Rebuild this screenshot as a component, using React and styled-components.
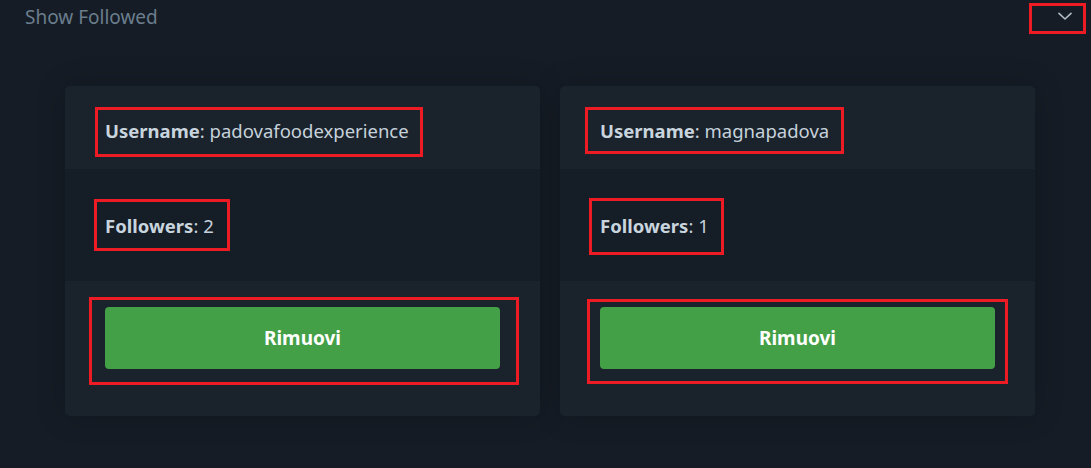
import React from "react";
import styled, { createGlobalStyle } from "styled-components";

const Global = createGlobalStyle`
  html, body { margin: 0; padding: 0; background: #151c25; }
  body { font-family: "Noto Sans", "Open Sans", sans-serif; }
  * { box-sizing: border-box; }
`;

const Page = styled.div`
  width: 1091px;
  height: 468px;
  background: #151c25;
  overflow: hidden;
`;

const Header = styled.div`
  position: relative;
  height: 35px;
  display: flex;
  align-items: center;
  justify-content: space-between;
  padding: 0 14px 2px 25px;
`;

const Title = styled.span`
  font-size: 19px;
  color: #6b7e8d;
`;

const Toggle = styled.button`
  background: none;
  border: none;
  padding: 0;
  width: 24px;
  height: 24px;
  display: flex;
  align-items: center;
  justify-content: center;
  color: #aebac5;
  margin-top: -1px;
`;

const CardRow = styled.div`
  display: grid;
  grid-template-columns: 475px 475px;
  gap: 20px;
  padding: 51px 0 0 65px;
`;

const Card = styled.div`
  border-radius: 5px;
  overflow: hidden;
  background: #1a222b;
  box-shadow: 0 0 30px rgba(0, 0, 0, 0.18);
  display: flex;
  flex-direction: column;
`;

const Section = styled.div`
  position: relative;
  background: ${(p) => (p.$dark ? "#151d26" : "#1a222b")};
  padding: ${(p) => p.$pad};
`;

const Field = styled.div`
  font-size: 18.5px;
  line-height: 26px;
  color: #c6d2db;
  b { font-weight: 700; color: #c9d5de; }
`;

const RemoveButton = styled.button`
  display: block;
  width: 100%;
  height: 62px;
  border: none;
  border-radius: 4px;
  background: #43a047;
  color: #ffffff;
  font-family: "Noto Sans", "Open Sans", sans-serif;
  font-size: 19px;
  font-weight: 700;
  cursor: pointer;
`;

const Mark = styled.div`
  position: absolute;
  border: 3px solid #ed1c24;
  pointer-events: none;
`;

const Chevron = () => (
  <svg width="18" height="18" viewBox="0 0 24 24" fill="none" stroke="currentColor" strokeWidth="2.2" strokeLinecap="round" strokeLinejoin="round">
    <path d="M4 8.5l8 7.5 8-7.5" />
  </svg>
);

const users = [
  {
    name: "padovafoodexperience",
    followers: 2,
    marks: [
      { left: 30, top: 21, width: 328, height: 50 },
      { left: 29, top: 30, width: 136, height: 52 },
      { left: 24, top: 16, width: 430, height: 88 },
    ],
  },
  {
    name: "magnapadova",
    followers: 1,
    marks: [
      { left: 25, top: 21, width: 259, height: 47 },
      { left: 29, top: 29, width: 135, height: 57 },
      { left: 27, top: 18, width: 421, height: 85 },
    ],
  },
];

export default function App() {
  return (
    <Page>
      <Global />
      <Header>
        <Title>Show Followed</Title>
        <Toggle aria-label="toggle">
          <Chevron />
        </Toggle>
        <Mark style={{ left: 1029, top: 3, width: 57, height: 31 }} />
      </Header>
      <CardRow>
        {users.map((u) => (
          <Card key={u.name}>
            <Section $pad="32px 40px 25px">
              <Field>
                <b>Username</b>: {u.name}
              </Field>
              <Mark style={u.marks[0]} />
            </Section>
            <Section $dark $pad="44px 40px 42px">
              <Field>
                <b>Followers</b>: {u.followers}
              </Field>
              <Mark style={u.marks[1]} />
            </Section>
            <Section $pad="26px 40px 47px">
              <RemoveButton>Rimuovi</RemoveButton>
              <Mark style={u.marks[2]} />
            </Section>
          </Card>
        ))}
      </CardRow>
    </Page>
  );
}
